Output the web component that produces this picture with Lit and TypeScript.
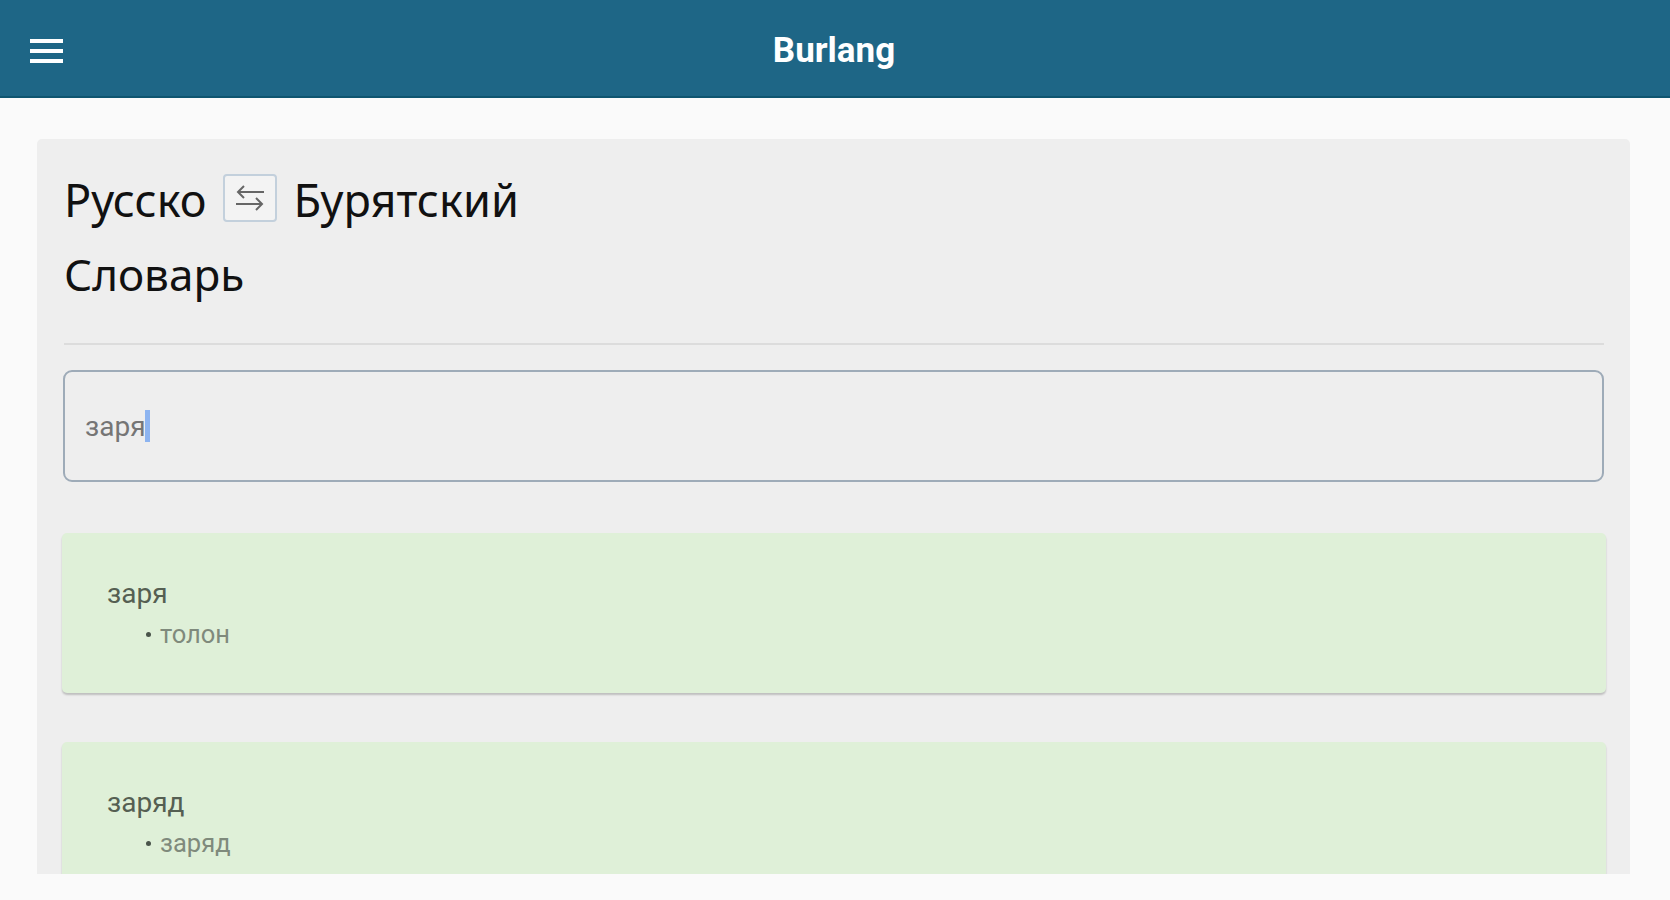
import { LitElement, html, css } from 'lit';
import { customElement } from 'lit/decorators.js';

const results = [
  { word: 'заря', translation: 'толон' },
  { word: 'заряд', translation: 'заряд' },
];

@customElement('app-root')
export class AppRoot extends LitElement {
  static styles = css`
    :host {
      display: block;
      height: 900px;
      overflow: hidden;
      background: #fafafa;
      font-family: Roboto, sans-serif;
    }
    header {
      display: flex;
      align-items: center;
      justify-content: center;
      position: relative;
      height: 98px;
      box-sizing: border-box;
      padding: 5px 2px 0 0;
      background: #1e6686;
      border-bottom: 2px solid #0f5570;
      color: #fff;
    }
    .menu {
      position: absolute;
      left: 30px;
      top: 39px;
      width: 33px;
      height: 24px;
      display: block;
    }
    header h1 {
      margin: 0;
      font-size: 35px;
      font-weight: 700;
      line-height: 1;
    }
    main {
      padding: 41px 40px 0 37px;
    }
    .panel {
      height: 735px;
      box-sizing: border-box;
      overflow: hidden;
      padding: 23px 26px 0 27px;
      background: #eeeeee;
      border-radius: 5px 5px 0 0;
    }
    .title {
      font-family: 'Noto Sans', sans-serif;
      font-size: 45px;
      font-weight: 400;
      line-height: 75px;
      height: 75px;
      color: #111;
      display: flex;
      align-items: center;
      gap: 16px;
    }
    .title.sub {
      font-size: 44px;
      height: 74px;
      line-height: 74px;
    }
    .swap {
      width: 54px;
      height: 48px;
      box-sizing: border-box;
      margin: -4px 0 0 1px;
      border: 2px solid #c3d0dc;
      border-radius: 4px;
      background: #f3f3f3;
      display: flex;
      align-items: center;
      justify-content: center;
      padding: 0;
    }
    .swap svg {
      width: 30px;
      height: 28px;
    }
    hr {
      margin: 32px 0 25px;
      border: 0;
      border-top: 2px solid #dcdcdc;
    }
    .search {
      height: 112px;
      box-sizing: border-box;
      margin-left: -1px;
      border: 2px solid #9eabb8;
      border-radius: 9px;
      display: flex;
      align-items: center;
      padding-left: 20px;
      font-size: 28px;
      color: #757575;
      margin-bottom: 51px;
    }
    .caret {
      display: inline-block;
      width: 5px;
      height: 32px;
      background: #8db4f0;
      margin-left: -1px;
    }
    .card {
      margin: 0 -2px 49px -2px;
      height: 160px;
      box-sizing: border-box;
      padding: 46px 45px 0;
      background: #dff0d8;
      border-radius: 5px;
      box-shadow: 0 2px 2px rgba(0, 0, 0, 0.2);
    }
    .word {
      font-size: 28px;
      line-height: 30px;
      color: #555f52;
    }
    .translation {
      font-size: 25.5px;
      line-height: 30px;
      margin-top: 10px;
      margin-left: 39px;
      color: #7f8a7c;
      display: flex;
      align-items: center;
      gap: 9px;
    }
    .translation::before {
      content: '';
      width: 5px;
      height: 5px;
      border-radius: 50%;
      background: #49544a;
    }
  `;

  render() {
    return html`
      <header>
        <svg class="menu" viewBox="0 0 33 24" fill="#fff">
          <rect y="0" width="33" height="4"></rect>
          <rect y="10" width="33" height="4"></rect>
          <rect y="20" width="33" height="4"></rect>
        </svg>
        <h1>Burlang</h1>
      </header>
      <main>
        <section class="panel">
          <div class="title">
            <span>Русско</span>
            <button class="swap" aria-label="Поменять языки">
              <svg viewBox="0 0 30 28" fill="none" stroke="#666" stroke-width="2">
                <path d="M29 8H3M9 2L3 8l6 6"></path>
                <path d="M1 20h26M21 14l6 6-6 6"></path>
              </svg>
            </button>
            <span>Бурятский</span>
          </div>
          <div class="title sub">Словарь</div>
          <hr />
          <div class="search"><span>заря</span><span class="caret"></span></div>
          ${results.map(
            (r) => html`
              <div class="card">
                <div class="word">${r.word}</div>
                <div class="translation">${r.translation}</div>
              </div>
            `
          )}
        </section>
      </main>
    `;
  }
}
